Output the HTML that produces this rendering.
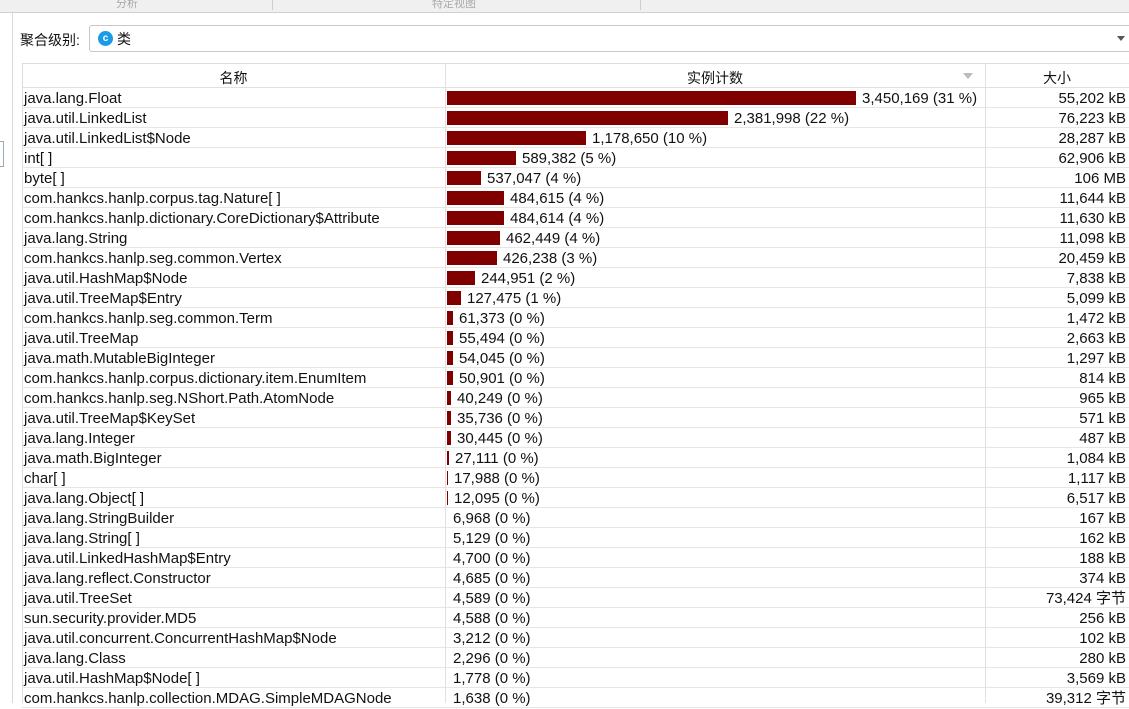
<!DOCTYPE html><html><head><meta charset="utf-8"><style>
*{margin:0;padding:0;box-sizing:border-box}
body{width:1129px;height:703px;overflow:hidden;background:#fff;font-family:"Liberation Sans","Noto Sans CJK SC",sans-serif;font-size:15px;color:#111;position:relative}
.top{position:absolute;left:0;top:0;width:1129px;height:13px;background:#f0f0f0;border-bottom:1px solid #d0d0d0}
.top span{position:absolute;top:-5px;font-size:11px;color:#aaa}
.vl{position:absolute;left:12px;top:13px;width:1px;height:690px;background:#d8d8d8}
.combo{position:absolute;left:89px;top:25px;width:1045px;height:27px;border:1px solid #c8c8c8;border-radius:3px;background:#fff}
.row{position:absolute;left:0;height:20px;width:1107px;border-bottom:1px solid #e6e6e6}
.c{position:absolute;top:1px;height:20px;line-height:20px;white-space:nowrap}
.n{left:2px}
.s{right:3px;text-align:right}
.bar{position:absolute;left:425px;top:3px;height:14px;background:#800000}
.sep{position:absolute;top:0;width:1px;height:640px;background:#e0e0e0}
</style></head><body>
<div class="top"><span style="left:116px">分析</span><span style="left:432px">特定视图</span><div style="position:absolute;left:272px;top:0;width:1px;height:10px;background:#ccc"></div><div style="position:absolute;left:640px;top:0;width:1px;height:10px;background:#ccc"></div></div>
<div class="vl"></div>
<div style="position:absolute;left:0;top:141px;width:4px;height:26px;border:1px solid #9ab;border-left:none"></div>
<div style="position:absolute;left:20px;top:30px;font-size:14px">聚合级别:</div>
<div class="combo"><div style="position:absolute;left:8px;top:5px;width:15px;height:15px;border-radius:50%;background:#1a9be8;color:#fff;font-size:10px;font-weight:bold;text-align:center;line-height:15px">c</div><div style="position:absolute;left:27px;top:3px;font-size:14px">类</div><div style="position:absolute;right:8px;top:10px;width:0;height:0;border-left:4px solid transparent;border-right:4px solid transparent;border-top:5px solid #555"></div></div>
<div style="position:absolute;left:22px;top:63px;width:1107px;height:25px;border-top:1px solid #ddd;border-bottom:1px solid #e0e0e0;background:#fff;font-size:14px">
<div style="position:absolute;left:0;width:423px;text-align:center;top:4px">名称</div>
<div style="position:absolute;left:423px;width:540px;text-align:center;top:4px">实例计数</div>
<div style="position:absolute;left:941px;top:9px;border-left:5px solid transparent;border-right:5px solid transparent;border-top:6px solid #bbb"></div>
<div style="position:absolute;left:963px;width:144px;text-align:center;top:4px">大小</div>
</div>
<div style="position:absolute;left:22px;top:63px;width:1px;height:640px;background:#ddd"></div>
<div id="t" style="position:absolute;left:22px;top:88px;width:1107px;height:620px">
<div class="sep" style="left:423px;top:-25px"></div><div class="sep" style="left:963px;top:-25px"></div>
</div>
<script>
var d=[["java.lang.Float",409,"3,450,169 (31 %)","55,202 kB"],["java.util.LinkedList",281,"2,381,998 (22 %)","76,223 kB"],["java.util.LinkedList$Node",139,"1,178,650 (10 %)","28,287 kB"],["int[ ]",69,"589,382 (5 %)","62,906 kB"],["byte[ ]",34,"537,047 (4 %)","106 MB"],["com.hankcs.hanlp.corpus.tag.Nature[ ]",57,"484,615 (4 %)","11,644 kB"],["com.hankcs.hanlp.dictionary.CoreDictionary$Attribute",57,"484,614 (4 %)","11,630 kB"],["java.lang.String",53,"462,449 (4 %)","11,098 kB"],["com.hankcs.hanlp.seg.common.Vertex",50,"426,238 (3 %)","20,459 kB"],["java.util.HashMap$Node",28,"244,951 (2 %)","7,838 kB"],["java.util.TreeMap$Entry",14,"127,475 (1 %)","5,099 kB"],["com.hankcs.hanlp.seg.common.Term",6,"61,373 (0 %)","1,472 kB"],["java.util.TreeMap",6,"55,494 (0 %)","2,663 kB"],["java.math.MutableBigInteger",6,"54,045 (0 %)","1,297 kB"],["com.hankcs.hanlp.corpus.dictionary.item.EnumItem",6,"50,901 (0 %)","814 kB"],["com.hankcs.hanlp.seg.NShort.Path.AtomNode",4,"40,249 (0 %)","965 kB"],["java.util.TreeMap$KeySet",4,"35,736 (0 %)","571 kB"],["java.lang.Integer",4,"30,445 (0 %)","487 kB"],["java.math.BigInteger",2,"27,111 (0 %)","1,084 kB"],["char[ ]",1,"17,988 (0 %)","1,117 kB"],["java.lang.Object[ ]",1,"12,095 (0 %)","6,517 kB"],["java.lang.StringBuilder",0,"6,968 (0 %)","167 kB"],["java.lang.String[ ]",0,"5,129 (0 %)","162 kB"],["java.util.LinkedHashMap$Entry",0,"4,700 (0 %)","188 kB"],["java.lang.reflect.Constructor",0,"4,685 (0 %)","374 kB"],["java.util.TreeSet",0,"4,589 (0 %)","73,424 字节"],["sun.security.provider.MD5",0,"4,588 (0 %)","256 kB"],["java.util.concurrent.ConcurrentHashMap$Node",0,"3,212 (0 %)","102 kB"],["java.lang.Class",0,"2,296 (0 %)","280 kB"],["java.util.HashMap$Node[ ]",0,"1,778 (0 %)","3,569 kB"],["com.hankcs.hanlp.collection.MDAG.SimpleMDAGNode",0,"1,638 (0 %)","39,312 字节"]];
var h="";d.forEach(function(r,i){var bx=r[1]?'<div class="bar" style="width:'+r[1]+'px"></div>':'';var tl=425+r[1]+6;h+='<div class="row" style="top:'+(i*20)+'px"><div class="c n">'+r[0]+'</div>'+bx+'<div class="c" style="left:'+tl+'px">'+r[2]+'</div><div class="c s">'+r[3]+'</div></div>';});
document.getElementById("t").insertAdjacentHTML("afterbegin",h);
</script>
</body></html>
